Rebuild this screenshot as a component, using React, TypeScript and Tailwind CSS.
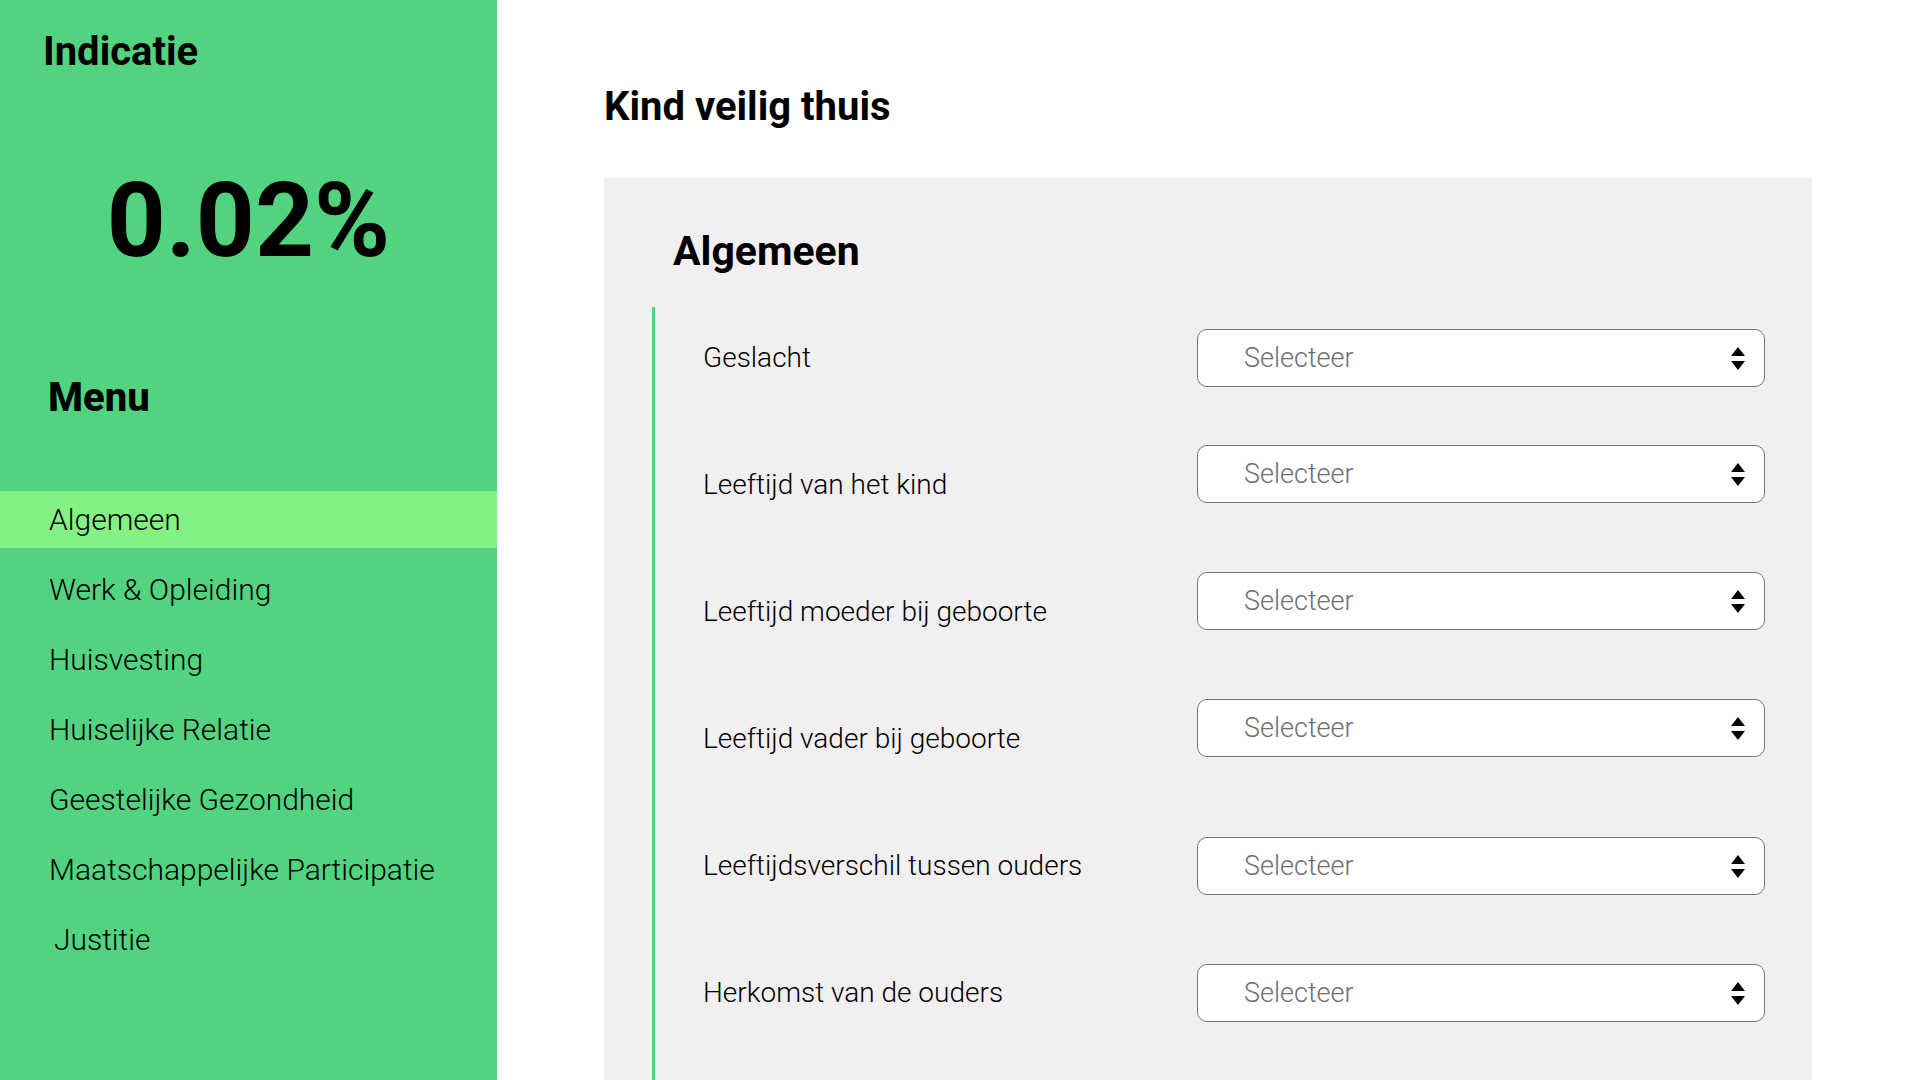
import React from 'react';

const menuItems = [
  'Algemeen',
  'Werk & Opleiding',
  'Huisvesting',
  'Huiselijke Relatie',
  'Geestelijke Gezondheid',
  'Maatschappelijke Participatie',
  'Justitie',
];

const fields = [
  { label: 'Geslacht', lifted: false },
  { label: 'Leeftijd van het kind', lifted: true },
  { label: 'Leeftijd moeder bij geboorte', lifted: true },
  { label: 'Leeftijd vader bij geboorte', lifted: true },
  { label: 'Leeftijdsverschil tussen ouders', lifted: false },
  { label: 'Herkomst van de ouders', lifted: false },
];

const SortArrows: React.FC = () => (
  <svg width="14" height="23" viewBox="0 0 14 23" className="shrink-0">
    <polygon points="7,0 14,9 0,9" fill="#000" />
    <polygon points="0,14 14,14 7,23" fill="#000" />
  </svg>
);

const FakeSelect: React.FC<{ lifted: boolean }> = ({ lifted }) => (
  <div
    className={
      'flex h-[58px] w-[568px] shrink-0 items-center justify-between rounded-[10px] border border-[#767676] bg-white pl-[46px] pr-[19px] ' +
      (lifted ? 'mb-[22px]' : '')
    }
  >
    <span className="text-[27px] font-light text-[#6f6f6f]">Selecteer</span>
    <SortArrows />
  </div>
);

const App: React.FC = () => {
  const active = 'Algemeen';

  return (
    <div className="flex h-screen w-full overflow-hidden bg-white font-['Roboto',sans-serif] text-black">
      <aside className="flex w-[497px] shrink-0 flex-col bg-[#51d37f] pt-8">
        <h1 className="pl-[43px] text-[40px] font-bold leading-none">Indicatie</h1>
        <div className="mt-[97px] text-center text-[103px] font-bold leading-none">0.02%</div>
        <h2 className="mt-[106px] pl-[48px] text-[40px] font-extrabold leading-none">Menu</h2>
        <nav className="mt-[73px] flex flex-col gap-[13px]">
          {menuItems.map((item) => (
            <div
              key={item}
              className={
                'flex h-[57px] items-center text-[30px] font-light ' +
                (item === active ? 'bg-[#84f283] ' : '') +
                (item === 'Justitie' ? 'pl-[54px]' : 'pl-[49px]')
              }
            >
              {item}
            </div>
          ))}
        </nav>
      </aside>

      <main className="flex min-w-0 flex-1 flex-col pl-[107px] pr-[108px] pt-[87px]">
        <h1 className="text-[40px] font-bold leading-none">Kind veilig thuis</h1>
        <section className="mt-[51px] flex-1 bg-[#f1eff0] pl-12 pr-[47px] pt-[53px]">
          <h2 className="ml-[21px] text-[41px] font-bold leading-none">Algemeen</h2>
          <div className="mt-[35px] flex h-full flex-col gap-[69px] border-l-[3px] border-[#51d37f] pl-12 pt-[22px]">
            {fields.map((f) => (
              <div key={f.label} className="flex h-[58px] items-center">
                <label className="w-[494px] shrink-0 text-[28px] font-light">{f.label}</label>
                <FakeSelect lifted={f.lifted} />
              </div>
            ))}
          </div>
        </section>
      </main>
    </div>
  );
};

export default App;
